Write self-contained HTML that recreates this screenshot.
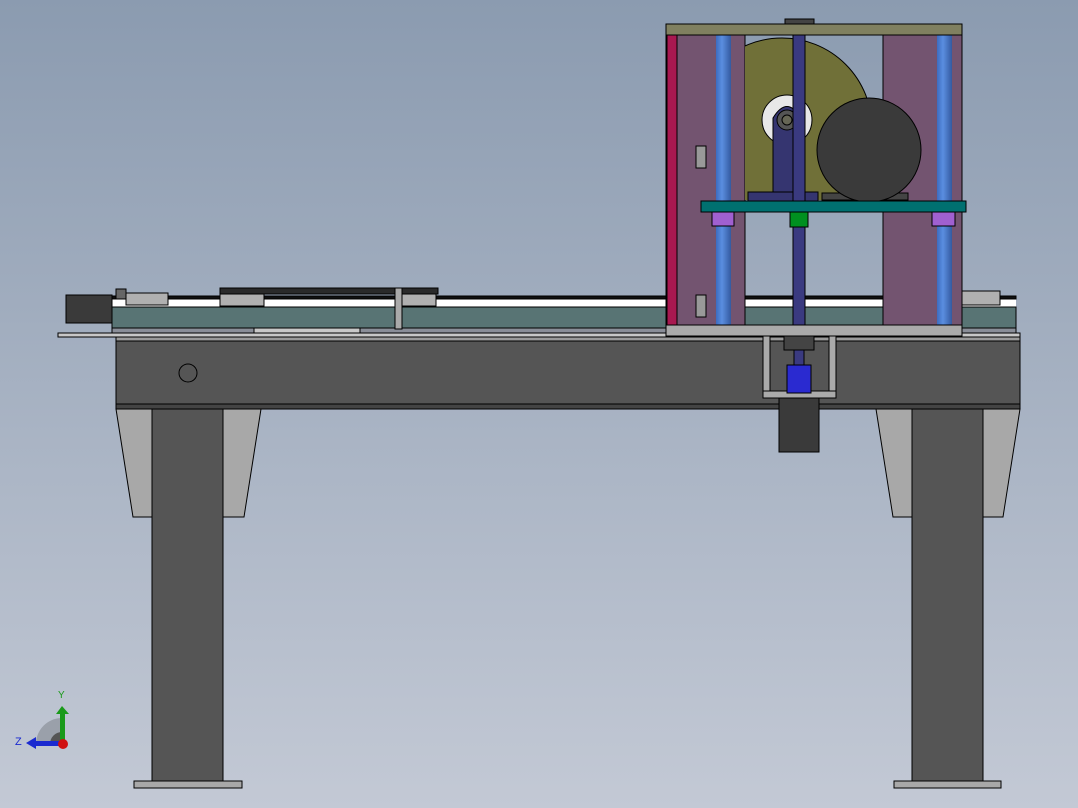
<!DOCTYPE html>
<html><head><style>
html,body{margin:0;padding:0;width:1078px;height:808px;overflow:hidden}
</style></head><body>
<svg width="1078" height="808" viewBox="0 0 1078 808" xmlns="http://www.w3.org/2000/svg" font-family="Liberation Sans, sans-serif">
<defs>
<linearGradient id="bg" x1="0" y1="0" x2="0" y2="1">
<stop offset="0" stop-color="#8b9bb0"/><stop offset="1" stop-color="#c3c9d5"/>
</linearGradient>
<linearGradient id="rod" x1="0" x2="1"><stop offset="0" stop-color="#3c6cc0"/><stop offset="0.4" stop-color="#5a8ee0"/><stop offset="1" stop-color="#345aa0"/></linearGradient>
<clipPath id="win"><rect x="745" y="35" width="138" height="165"/></clipPath>
</defs>
<rect width="1078" height="808" fill="url(#bg)"/>
<g stroke="#000" stroke-width="1">
<polygon points="116,409 152,409 152,517 133,517" fill="#a8a8a8"/>
<polygon points="223,409 261,409 244,517 223,517" fill="#a8a8a8"/>
<polygon points="876,409 912,409 912,517 893,517" fill="#a8a8a8"/>
<polygon points="983,409 1020,409 1003,517 983,517" fill="#a8a8a8"/>
<rect x="152" y="409" width="71" height="372" fill="#555"/>
<rect x="912" y="409" width="71" height="372" fill="#555"/>
<rect x="134" y="781" width="108" height="7" fill="#a8a8a8"/>
<rect x="894" y="781" width="107" height="7" fill="#a8a8a8"/>
<rect x="112" y="298" width="904" height="10" fill="#fff" stroke="none"/>
<rect x="112" y="296" width="904" height="3" fill="#111"/>
<rect x="112" y="307" width="904" height="21" fill="#587474"/>
<rect x="112" y="328" width="904" height="5" fill="#8a8e98"/>
<rect x="254" y="328" width="106" height="5" fill="#c8c8c8"/>
<rect x="66" y="295" width="46" height="28" fill="#3a3a3a"/>
<rect x="116" y="289" width="10" height="10" fill="#666"/>
<rect x="126" y="293" width="42" height="12" fill="#b0b0b0"/>
<rect x="220" y="288" width="218" height="6" fill="#2a2a2a"/>
<rect x="220" y="294" width="44" height="12" fill="#b0b0b0"/>
<rect x="402" y="294" width="34" height="12" fill="#b0b0b0"/>
<rect x="395" y="288" width="7" height="41" fill="#aaa"/>
<rect x="962" y="291" width="38" height="14" fill="#b0b0b0"/>
<rect x="58" y="333" width="962" height="4" fill="#c8c8c8"/>
<rect x="116" y="337" width="904" height="72" fill="#555"/>
<rect x="116" y="337" width="904" height="4" fill="#9a9a9a"/>
<rect x="116" y="404" width="904" height="5" fill="#444"/>
<circle cx="188" cy="373" r="9" fill="none"/>
<rect x="763" y="336" width="7" height="62" fill="#aaa"/>
<rect x="829" y="336" width="7" height="62" fill="#aaa"/>
<rect x="763" y="391" width="73" height="7" fill="#aaa"/>
<rect x="779" y="398" width="40" height="54" fill="#3a3a3a"/>
<rect x="784" y="336" width="30" height="14" fill="#444"/>
<rect x="794" y="350" width="10" height="15" fill="#3a3a80"/>
<rect x="787" y="365" width="24" height="28" fill="#2a2ad0"/>
<rect x="666" y="35" width="79" height="290" fill="#735470"/>
<rect x="883" y="35" width="79" height="290" fill="#735470"/>
<rect x="667" y="35" width="10" height="290" fill="#a81850"/>
<g clip-path="url(#win)">
<circle cx="782" cy="128" r="90" fill="#707038"/>
</g>
<circle cx="787" cy="120" r="25" fill="#e8e8e8"/>
<path d="M773,118 Q787,95 801,118 L801,195 L773,195 Z" fill="#353570"/>
<rect x="748" y="192" width="70" height="10" fill="#353570"/>
<circle cx="787" cy="120" r="10" fill="#555"/>
<circle cx="787" cy="120" r="5" fill="#665"/>
<rect x="822" y="193" width="86" height="7" fill="#444"/>
<circle cx="869" cy="150" r="52" fill="#3a3a3a"/>
<rect x="716" y="35" width="15" height="290" fill="url(#rod)" stroke="none"/>
<rect x="937" y="35" width="15" height="290" fill="url(#rod)" stroke="none"/>
<rect x="793" y="35" width="12" height="290" fill="#3a3a80"/>
<rect x="712" y="212" width="22" height="14" fill="#a060d0"/>
<rect x="932" y="212" width="23" height="14" fill="#a060d0"/>
<rect x="790" y="212" width="18" height="15" fill="#009020"/>
<rect x="701" y="201" width="265" height="11" fill="#007070"/>
<rect x="666" y="24" width="296" height="11" fill="#808060"/>
<rect x="785" y="19" width="29" height="5" fill="#444"/>
<rect x="666" y="325" width="296" height="11" fill="#aaa"/>
<rect x="696" y="146" width="10" height="22" fill="#999"/>
<rect x="696" y="295" width="10" height="22" fill="#999"/>
</g>
<path d="M36,744 A26,26 0 0 1 62,718 L62,744 Z" fill="#9aa0aa"/>
<path d="M50,744 A12,12 0 0 1 62,732 L62,744 Z" fill="#555"/>
<rect x="60" y="712" width="5" height="30" fill="#1a9a1a"/>
<polygon points="56,714 62,706 69,714" fill="#1a9a1a"/>
<rect x="34" y="741" width="28" height="5" fill="#1a2ad0"/>
<polygon points="36,737 26,743 36,749" fill="#1a2ad0"/>
<circle cx="63" cy="744" r="5" fill="#d01010"/>
<text x="58" y="698" font-size="10" fill="#1a9a1a">Y</text>
<text x="15" y="745" font-size="11" fill="#1a2ad0">Z</text>
</svg>
</body></html>
